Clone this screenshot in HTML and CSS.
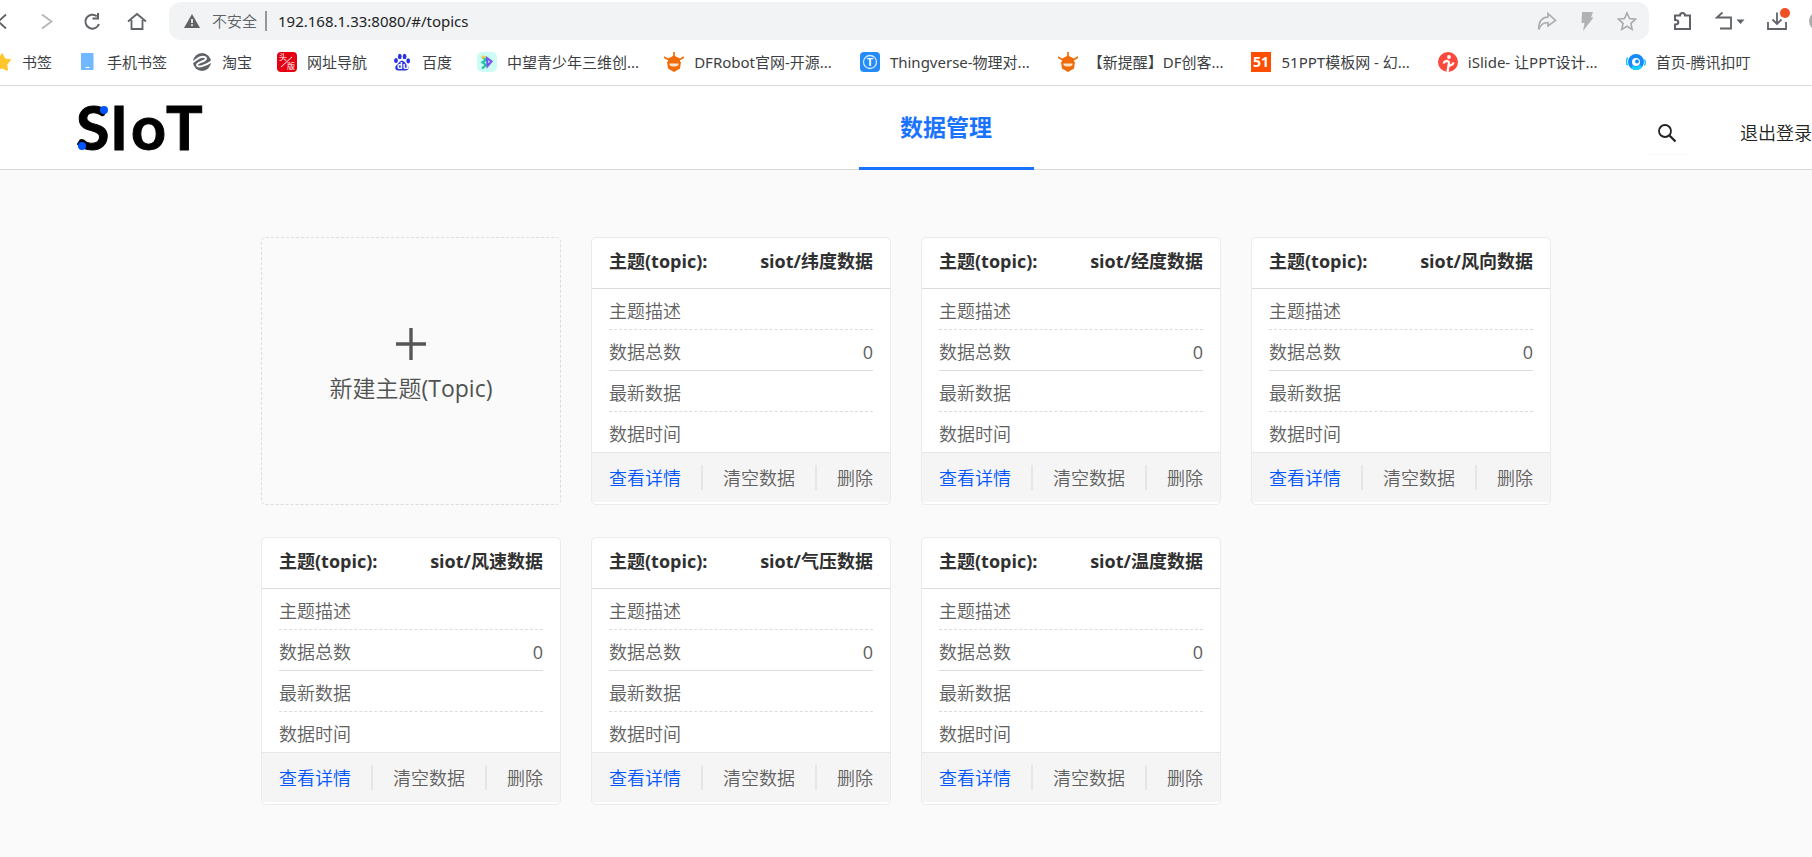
FILE: index.html
```
<!DOCTYPE html>
<html lang="zh-CN">
<head>
<meta charset="utf-8">
<title>SIoT</title>
<link rel="stylesheet" href="styles.css">
</head>
<body>
<div class="browser">
  <div class="toolbar">
    <div class="nav-buttons">
      <button class="tool" aria-label="后退"><svg width="20" height="20" viewBox="0 0 20 20"><path d="M14 3.500 6.500 10.500 14 17.500" fill="none" stroke="#5f6368" stroke-width="1.800"/></svg></button>
      <button class="tool" aria-label="前进"><svg width="20" height="20" viewBox="0 0 20 20"><path d="M5 3.500 14.500 10.500 5 17.500" fill="none" stroke="#b4b6b8" stroke-width="1.800"/></svg></button>
      <button class="tool" aria-label="刷新"><svg width="20" height="20" viewBox="0 0 20 20"><path d="M14.800 5.200A7 7 0 1 0 17 13" fill="none" stroke="#5f6368" stroke-width="2"/><path d="M16 2v5.500h-5.500" fill="none" stroke="#5f6368" stroke-width="2"/></svg></button>
      <button class="tool" aria-label="主页"><svg width="20" height="20" viewBox="0 0 20 20"><path d="M1 10.500 10 3l9 7.500M4.500 9v9h11V9" fill="none" stroke="#5f6368" stroke-width="1.800"/></svg></button>
    </div>
    <div class="address">
      <svg width="16" height="14" viewBox="0 0 16 14"><path d="M8 0 16 14H0z" fill="#5f6368"/><path d="M8 5v4M8 10.300v1.700" stroke="#fff" stroke-width="1.600"/></svg>
      <label class="insecure" for="url">不安全</label>
      <input class="url" id="url" type="text" value="192.168.1.33:8080/#/topics">
      <button class="tool" aria-label="分享"><svg width="20" height="20" viewBox="0 0 20 20"><path d="M11 2.500 18.500 9.500 11 15v-3.500C6.500 11.500 3.500 13 1.800 18.500 1.500 12 4 6.500 11 6z" fill="none" stroke="#a9abad" stroke-width="1.600"/></svg></button>
      <button class="tool" aria-label="加速"><svg width="20" height="20" viewBox="0 0 20 20"><path d="M5 1h11l-2 5.500h2.500L6 20l1.500-8H4.500z" fill="#b0b2b4"/></svg></button>
      <button class="tool" aria-label="收藏"><svg width="20" height="20" viewBox="0 0 20 20"><path d="m10 2 2.500 5.600 6 .6-4.600 4.200 1.300 6L10 15.300 4.800 18.400l1.300-6L1.500 8.200l6-.6z" fill="none" stroke="#a9abad" stroke-width="1.600"/></svg></button>
    </div>
    <div class="extras">
      <button class="tool" aria-label="扩展"><svg width="20" height="20" viewBox="0 0 20 20"><path d="M2 4.500h5c0-3.500 5-3.500 5 0h5v13.500H2v-4.500c4.500 0 4.500-4.500 0-4.500z" fill="none" stroke="#5f6368" stroke-width="2"/></svg></button>
      <button class="tool wide" aria-label="撤销"><svg width="30" height="20" viewBox="0 0 30 20"><path d="M7.500 1.500 1.800 6.500H16V17.500H5" fill="none" stroke="#5f6368" stroke-width="1.800"/><path d="M21.500 8.500h8l-4 4.500z" fill="#5f6368"/></svg></button>
      <button class="tool download" aria-label="下载"><svg width="20" height="20" viewBox="0 0 20 20"><path d="M1 11v7h18v-7M10 1.500v11M5.500 8.500l4.500 4.500 4.500-4.500" fill="none" stroke="#5f6368" stroke-width="1.800"/></svg><span class="dot"></span></button>
      <span class="avatar"></span>
    </div>
  </div>
  <nav class="bookmarks">
    <a href="#"><svg width="20" height="20" viewBox="0 0 20 20"><path d="m10 2 2.800 5.200 5.400.8-3.800 4.200.8 5.800-5.200-2.400L4.800 18l.8-5.800L1.800 8l5.400-.8z" fill="#ffc62b" stroke="#ffc62b" stroke-width="1.500" stroke-linejoin="round"/></svg><span>书签</span></a>
    <a href="#"><svg width="20" height="20" viewBox="0 0 20 20"><rect x="4" y="1" width="12.500" height="17" rx="1" fill="#70b8ff"/><path d="M8.500 15.500h4" stroke="#fff" stroke-width="1.200"/></svg><span>手机书签</span></a>
    <a href="#"><svg width="20" height="20" viewBox="0 0 20 20"><circle cx="10" cy="10" r="9" fill="#5f6368"/><path d="M0 10.500C4 9 6 4.800 10.500 4.800c5 0 4.500 3-.5 4.700-3 1.200-5 1.800-5 3.500 0 3 8 1.500 15-4" fill="none" stroke="#fff" stroke-width="1.900"/></svg><span>淘宝</span></a>
    <a href="#"><svg width="20" height="20" viewBox="0 0 20 20"><rect width="20" height="20" rx="4" fill="#e60012"/><text class="mini-cjk" x="2" y="8">头</text><text class="mini-cjk" x="10" y="17">版</text><path d="m4 15 11-10" stroke="#fff"/></svg><span>网址导航</span></a>
    <a href="#"><svg width="20" height="20" viewBox="0 0 20 20" fill="#2932e1"><ellipse cx="4" cy="8.500" rx="1.900" ry="2.600"/><ellipse cx="7.800" cy="4.400" rx="1.900" ry="2.700"/><ellipse cx="12.600" cy="4.400" rx="1.900" ry="2.700"/><ellipse cx="16.200" cy="8.800" rx="1.900" ry="2.600"/><path d="M10 8.800c2.500 0 3 2.500 5 4s2.600 5.700-1.500 5.700c-2 0-5 0-7 0-4.200 0-3.800-4-1.600-5.700C7 11.300 7.500 8.800 10 8.800z"/><text class="mini-du" x="5" y="17">du</text></svg><span>百度</span></a>
    <a href="#"><svg width="20" height="20" viewBox="0 0 20 20"><rect width="20" height="20" rx="5" fill="#ccfcf3"/><path d="M5 4.500 9 8l-3.500 2.300L9 13l-4 3.500" fill="none" stroke="#19c5a2" stroke-width="2.200"/><path d="m10 6 4.500 3.500-4 4.500z" fill="none" stroke="#7758e8" stroke-width="2.200"/><path d="m5 3 4 2-4 2z" fill="#ffc72b"/></svg><span>中望青少年三维创...</span></a>
    <a class="long" href="#"><svg width="20" height="20" viewBox="0 0 20 20"><path d="M10 0v5M0 5l4 2.500M20 5l-4 2.500" stroke="#f06c0a" stroke-width="1.700"/><path d="M10 3.500 16 6.500v3l1 .5-1 6.500L10 20l-6-3.500L3 10l1-.5v-3z" fill="#f06c0a"/><path d="M5.500 11.500h9v1.500c-2 2-7 2-9 0z" fill="#ffe3ca"/></svg><span>DFRobot官网-开源...</span></a>
    <a class="long" href="#"><svg width="20" height="20" viewBox="0 0 20 20"><rect width="20" height="20" rx="4" fill="#248bfb"/><circle cx="10" cy="10" r="6.500" fill="none" stroke="#d5eaff" stroke-width="1.300"/><text class="mini-t" x="10" y="14">T</text></svg><span>Thingverse-物理对...</span></a>
    <a class="long" href="#"><svg width="20" height="20" viewBox="0 0 20 20"><path d="M10 0v5M0 5l4 2.500M20 5l-4 2.500" stroke="#f06c0a" stroke-width="1.700"/><path d="M10 3.500 16 6.500v3l1 .5-1 6.500L10 20l-6-3.500L3 10l1-.5v-3z" fill="#f06c0a"/><path d="M5.500 11.500h9v1.500c-2 2-7 2-9 0z" fill="#ffe3ca"/></svg><span>【新提醒】DF创客...</span></a>
    <a class="long" href="#"><svg width="20" height="20" viewBox="0 0 20 20"><rect width="20" height="20" fill="#ff4e00"/><text class="mini-51" x="10" y="15">51</text></svg><span>51PPT模板网 - 幻...</span></a>
    <a class="long" href="#"><svg width="20" height="20" viewBox="0 0 20 20"><circle cx="10" cy="10" r="10" fill="#fb4a3c"/><circle cx="11" cy="5" r="1.900" fill="#fff"/><path d="M5.500 11.500c1-3 5.500-3.500 5.500-.5l-1.500 9M11.500 13.500c2 0 3.500-1.500 4-3" fill="none" stroke="#fff" stroke-width="2.300"/></svg><span>iSlide- 让PPT设计...</span></a>
    <a href="#"><svg width="20" height="20" viewBox="0 0 20 20"><circle cx="10" cy="10" r="6" fill="#fff" stroke="#148cff" stroke-width="4"/><path d="M6 15a6.300 6.300 0 0 0 9-1" fill="none" stroke="#12d3ff" stroke-width="3"/><circle cx="11" cy="9.500" r="1.900" fill="#148cff"/><path d="M1.500 5.500q-2 4 0 8M18.500 7.500q1.500 3.500 0 6" fill="none" stroke="#12c5ff" stroke-width="1.400"/></svg><span>首页-腾讯扣叮</span></a>
  </nav>
</div>

<header class="site-header">
  <a class="logo" href="#" aria-label="SIoT"><svg width="140" height="80" viewBox="-4 0 140 80"><text class="logo-text" y="62" x="-2 32 53 88">SIoT</text><circle cx="26" cy="22" r="4" fill="#0055ff"/><circle cx="4" cy="58" r="4" fill="#0055ff"/></svg></a>
  <a class="tab" href="#">数据管理</a>
  <div class="account">
    <button class="search" aria-label="搜索"><svg width="20" height="20" viewBox="0 0 20 20"><circle cx="8" cy="8" r="6" fill="none" stroke="#222" stroke-width="1.800"/><path d="m12 12 6.500 6.500" stroke="#222" stroke-width="2.200"/></svg></button>
    <a class="logout" href="#">退出登录</a>
  </div>
</header>

<main class="topics">
  <button class="new-topic">
    <svg width="30" height="32" viewBox="0 0 30 32"><path d="M15 0v32M0 16h30" stroke="#555756" stroke-width="3.400"/></svg>
    <span>新建主题<span class="latin">(Topic)</span></span>
  </button>

  <article class="card">
    <h2><span>主题(topic):</span><span>siot/纬度数据</span></h2>
    <dl>
      <div><dt>主题描述</dt><dd></dd></div>
      <div class="solid"><dt>数据总数</dt><dd>0</dd></div>
      <div><dt>最新数据</dt><dd></dd></div>
      <div><dt>数据时间</dt><dd></dd></div>
    </dl>
    <footer><button class="primary">查看详情</button><i></i><button>清空数据</button><i></i><button>删除</button></footer>
  </article>

  <article class="card">
    <h2><span>主题(topic):</span><span>siot/经度数据</span></h2>
    <dl>
      <div><dt>主题描述</dt><dd></dd></div>
      <div class="solid"><dt>数据总数</dt><dd>0</dd></div>
      <div><dt>最新数据</dt><dd></dd></div>
      <div><dt>数据时间</dt><dd></dd></div>
    </dl>
    <footer><button class="primary">查看详情</button><i></i><button>清空数据</button><i></i><button>删除</button></footer>
  </article>

  <article class="card">
    <h2><span>主题(topic):</span><span>siot/风向数据</span></h2>
    <dl>
      <div><dt>主题描述</dt><dd></dd></div>
      <div class="solid"><dt>数据总数</dt><dd>0</dd></div>
      <div><dt>最新数据</dt><dd></dd></div>
      <div><dt>数据时间</dt><dd></dd></div>
    </dl>
    <footer><button class="primary">查看详情</button><i></i><button>清空数据</button><i></i><button>删除</button></footer>
  </article>

  <article class="card">
    <h2><span>主题(topic):</span><span>siot/风速数据</span></h2>
    <dl>
      <div><dt>主题描述</dt><dd></dd></div>
      <div class="solid"><dt>数据总数</dt><dd>0</dd></div>
      <div><dt>最新数据</dt><dd></dd></div>
      <div><dt>数据时间</dt><dd></dd></div>
    </dl>
    <footer><button class="primary">查看详情</button><i></i><button>清空数据</button><i></i><button>删除</button></footer>
  </article>

  <article class="card">
    <h2><span>主题(topic):</span><span>siot/气压数据</span></h2>
    <dl>
      <div><dt>主题描述</dt><dd></dd></div>
      <div class="solid"><dt>数据总数</dt><dd>0</dd></div>
      <div><dt>最新数据</dt><dd></dd></div>
      <div><dt>数据时间</dt><dd></dd></div>
    </dl>
    <footer><button class="primary">查看详情</button><i></i><button>清空数据</button><i></i><button>删除</button></footer>
  </article>

  <article class="card">
    <h2><span>主题(topic):</span><span>siot/温度数据</span></h2>
    <dl>
      <div><dt>主题描述</dt><dd></dd></div>
      <div class="solid"><dt>数据总数</dt><dd>0</dd></div>
      <div><dt>最新数据</dt><dd></dd></div>
      <div><dt>数据时间</dt><dd></dd></div>
    </dl>
    <footer><button class="primary">查看详情</button><i></i><button>清空数据</button><i></i><button>删除</button></footer>
  </article>
</main>
</body>
</html>
```
FILE: styles.css
```
* { box-sizing: border-box; }
body {
  margin: 0;
  background: #fafafa;
  color: #606060;
  font: 350 18px/24px "Open Sans", "Noto Sans CJK SC", sans-serif;
}
button, input {
  margin: 0;
  padding: 0;
  border: 0;
  background: none;
  color: inherit;
  font: inherit;
}
button { cursor: pointer; }
a { color: inherit; text-decoration: none; }
svg { display: block; flex: none; }

/* Browser bars */
.browser {
  overflow: hidden;
  background: #fff;
  border-bottom: 1px solid #d7d9da;
  font-family: "Noto Sans", "Noto Sans CJK SC", sans-serif;
  font-size: 15px;
}
.toolbar { display: flex; align-items: center; height: 42px; }
.nav-buttons { display: flex; gap: 25px; margin-left: -8px; width: 177px; flex: none; }
.tool { position: relative; flex: none; width: 20px; height: 20px; }
.tool.wide { width: 30px; }
.address {
  display: flex;
  align-items: center;
  flex: 1;
  height: 38px;
  padding: 0 12px 0 15px;
  border-radius: 12px;
  background: #f1f3f4;
}
.insecure {
  margin-left: 12px;
  padding-right: 8px;
  border-right: 2px solid #96999c;
  line-height: 20px;
  color: #5f6368;
}
.url { flex: 1; min-width: 0; margin-left: 11px; color: #222426; font-weight: 400; outline: 0; }
.address .tool + .tool { margin-left: 20px; }
.extras { display: flex; align-items: center; gap: 22px; width: 163px; padding-left: 24px; flex: none; }
.download .dot {
  position: absolute;
  top: -3px;
  right: -3px;
  width: 10px;
  height: 10px;
  border-radius: 50%;
  background: #f04e23;
}
.avatar { flex: none; width: 20px; height: 20px; border-radius: 50%; background: #aaa; }
.bookmarks {
  display: flex;
  gap: 25px;
  height: 43px;
  margin-left: -8px;
  padding-top: 8px;
  color: #3c4043;
  font-weight: 400;
  white-space: nowrap;
}
.bookmarks a { display: flex; align-items: center; gap: 10px; height: 24px; }
.bookmarks .long { padding-right: 3px; }
.mini-cjk { font: 8px "Noto Sans CJK SC", sans-serif; fill: #fff; }
.mini-du { font: bold 9px "Open Sans", sans-serif; fill: #fff; }
.mini-t { font: bold 11px "Open Sans", sans-serif; fill: #fff; text-anchor: middle; }
.mini-51 { font: bold 14px "Open Sans", sans-serif; fill: #fff; text-anchor: middle; }

/* Site header */
.site-header {
  display: grid;
  grid-template-columns: 1fr auto 1fr;
  height: 84px;
  padding-left: 80px;
  background: #fff;
  border-bottom: 1px solid #d7d9da;
}
.logo { align-self: center; justify-self: start; margin-left: -6px; }
.logo-text { font: bold 61px Lato, sans-serif; fill: #000; stroke: #000; stroke-width: 1; }
.tab {
  width: 175px;
  height: 84px;
  padding-top: 25px;
  border-bottom: 3px solid #1a73ff;
  color: #1a73ff;
  font-size: 23px;
  line-height: 32px;
  font-weight: 700;
  text-align: center;
}
.account { display: flex; justify-content: flex-end; align-items: center; gap: 53px; padding-top: 10px; white-space: nowrap; }
.search {
  display: grid;
  place-items: center;
  width: 40px;
  height: 40px;
  border-radius: 4px;
  box-shadow: 0 2px 0 #fbfbfb;
}
.logout { color: #222; }

/* Topic grid */
.topics {
  display: grid;
  grid-template-columns: repeat(auto-fill, 300px);
  gap: 32px 30px;
  max-width: 1290px;
  margin: 0 auto;
  padding: 67px 0 52px;
}
.new-topic {
  display: flex;
  flex-direction: column;
  align-items: center;
  justify-content: center;
  gap: 12px;
  padding-bottom: 10px;
  border: 1px dashed #dcdcdc;
  border-radius: 5px;
  color: #505251;
  font-size: 23px;
  line-height: 32px;
}
.latin { font-weight: 400; }
.card {
  padding-bottom: 2px;
  background: #fff;
  border: 1px solid #ebebeb;
  border-radius: 5px;
}
.card h2 {
  display: flex;
  justify-content: space-between;
  margin: 0;
  padding: 11px 17px 15px;
  border-bottom: 1px solid #dcdcdc;
  color: #303030;
  font-size: 18px;
  line-height: 24px;
}
.card dl { margin: 0; padding: 0 17px; }
.card dl div {
  display: flex;
  justify-content: space-between;
  height: 41px;
  padding-top: 10px;
  border-bottom: 1px dashed #dcdcdc;
}
.card dl .solid { border-bottom-style: solid; }
.card dl div:last-child { height: 40px; border-bottom: 0; }
.card dd { margin: 0; font-weight: 400; }
.card footer {
  display: flex;
  align-items: center;
  justify-content: space-between;
  height: 50px;
  padding: 0 17px;
  border-top: 1px solid #e6e6e6;
  background: #f5f5f5;
}
.card footer i { width: 2px; height: 25px; background: #e6e6e6; }
.card .primary { color: #0055ff; }
```
